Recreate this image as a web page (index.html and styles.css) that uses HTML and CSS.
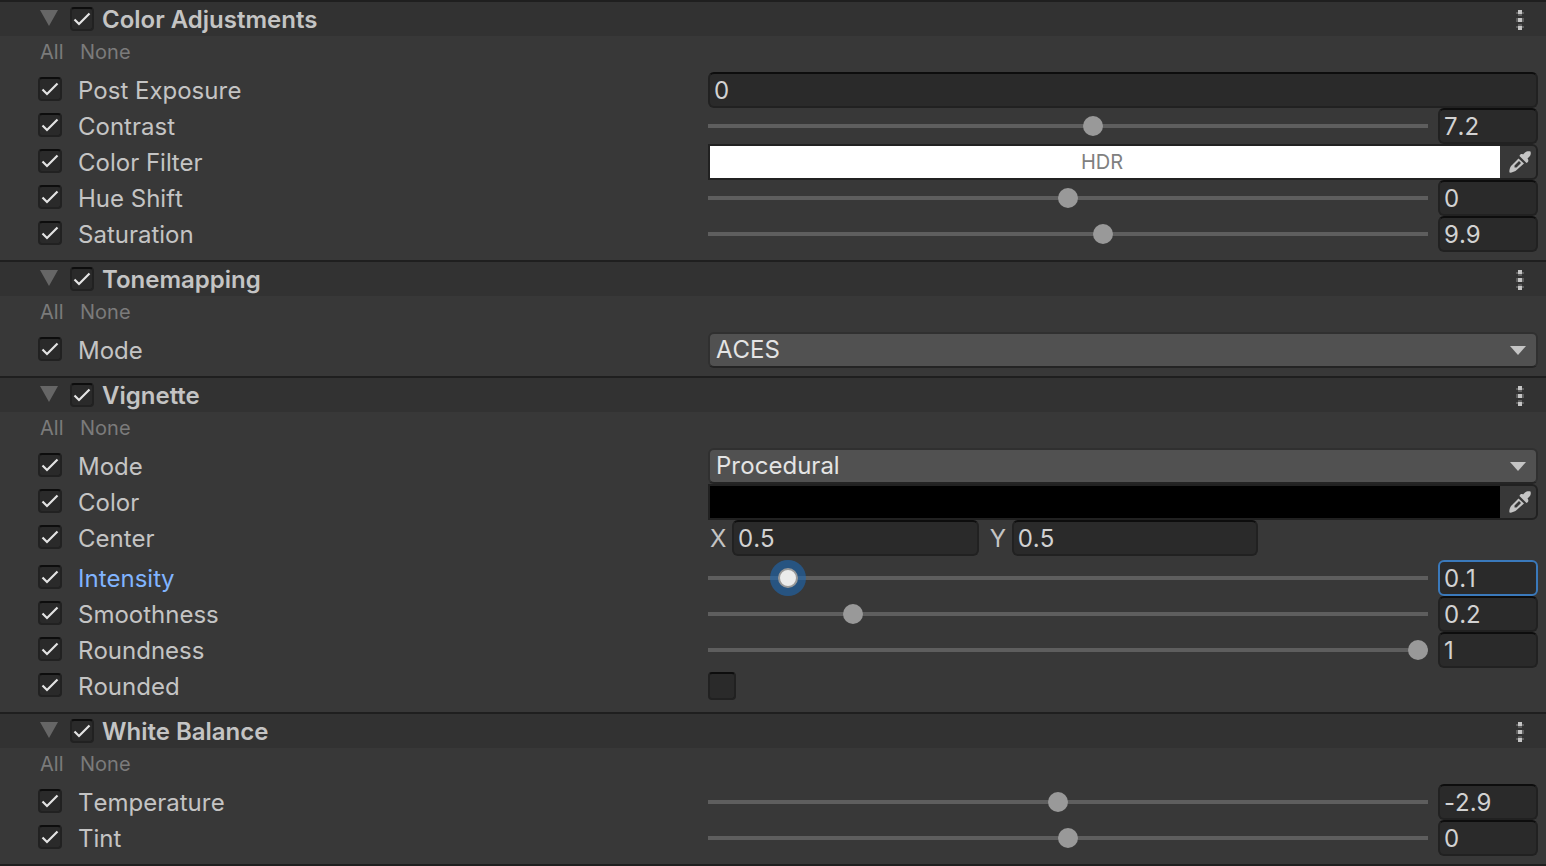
FILE: index.html
```html
<!DOCTYPE html>
<html lang="en">
<head>
<meta charset="utf-8">
<title>Volume Inspector</title>
<link rel="stylesheet" href="styles.css">
</head>
<body>
<svg class="defs" aria-hidden="true">
  <symbol id="fold" viewBox="0 0 18 16"><path d="M0 0H18L9 16Z"/></symbol>
  <symbol id="kebab" viewBox="0 0 8 20">
    <path d="M2 0H6V4H2ZM2 8H6V12H2ZM2 16H6V20H2Z"/>
    <path opacity=".3" d="M2 4H6V6H2ZM2 14H6V16H2ZM0 2H2V4H0ZM6 2H8V4H6ZM0 8H2V12H0ZM6 8H8V12H6ZM0 16H2V18H0ZM6 16H8V18H6Z"/>
  </symbol>
  <symbol id="dropper" viewBox="0 0 22 22">
    <path d="M16 1.500C17.500 0 20 0 21.500 .5C22 2 22 4 20.500 5.500L18.500 7.500C20 9 19.500 11.500 17.500 12L10.500 5C11 3 13 2.500 14 3.500Z"/>
    <path fill-rule="evenodd" d="M9.500 7.500L15 12.500L6.500 20C4.500 21 2 22 .5 21.500C0 20 .5 17.500 2 15ZM10 10L5.500 14.500V16.500H7.500L12 12Z"/>
  </symbol>
</svg>
<main class="inspector">
  <section class="component">
    <header class="bar">
      <button class="fold" aria-label="Collapse Color Adjustments"><svg><use href="#fold"/></svg></button>
      <input class="check" type="checkbox" id="color-adjustments" checked>
      <h2 class="title"><label for="color-adjustments">Color Adjustments</label></h2>
      <button class="more" aria-label="More options"><svg><use href="#kebab"/></svg></button>
    </header>
    <div class="toggles"><button class="all">All</button><button>None</button></div>
    <div class="row">
      <div class="name"><input class="check" type="checkbox" aria-label="Override Post Exposure" checked><label for="exposure">Post Exposure</label></div>
      <div class="control"><input class="field" id="exposure" type="text" value="0"></div>
    </div>
    <div class="row">
      <div class="name"><input class="check" type="checkbox" aria-label="Override Contrast" checked><label for="contrast">Contrast</label></div>
      <div class="control"><input class="slider" type="range" aria-label="Contrast slider" min="-100" max="100" step="0.1" value="7.2"><input class="field number" id="contrast" type="text" value="7.2"></div>
    </div>
    <div class="row">
      <div class="name"><input class="check" type="checkbox" aria-label="Override Color Filter" checked><label for="filter">Color Filter</label></div>
      <div class="control picker"><button class="swatch white" id="filter">HDR</button><button class="pick" aria-label="Pick color filter"><svg><use href="#dropper"/></svg></button></div>
    </div>
    <div class="row">
      <div class="name"><input class="check" type="checkbox" aria-label="Override Hue Shift" checked><label for="hue">Hue Shift</label></div>
      <div class="control"><input class="slider" type="range" aria-label="Hue Shift slider" min="-180" max="180" value="0"><input class="field number" id="hue" type="text" value="0"></div>
    </div>
    <div class="row">
      <div class="name"><input class="check" type="checkbox" aria-label="Override Saturation" checked><label for="saturation">Saturation</label></div>
      <div class="control"><input class="slider" type="range" aria-label="Saturation slider" min="-100" max="100" step="0.1" value="9.9"><input class="field number" id="saturation" type="text" value="9.9"></div>
    </div>
  </section>

  <section class="component">
    <header class="bar">
      <button class="fold" aria-label="Collapse Tonemapping"><svg><use href="#fold"/></svg></button>
      <input class="check" type="checkbox" id="tonemapping" checked>
      <h2 class="title"><label for="tonemapping">Tonemapping</label></h2>
      <button class="more" aria-label="More options"><svg><use href="#kebab"/></svg></button>
    </header>
    <div class="toggles"><button class="all">All</button><button>None</button></div>
    <div class="row">
      <div class="name"><input class="check" type="checkbox" aria-label="Override Mode" checked><label for="tone-mode">Mode</label></div>
      <div class="control dropdown"><select class="select" id="tone-mode"><option>ACES</option><option>Neutral</option><option>None</option></select></div>
    </div>
  </section>

  <section class="component">
    <header class="bar">
      <button class="fold" aria-label="Collapse Vignette"><svg><use href="#fold"/></svg></button>
      <input class="check" type="checkbox" id="vignette" checked>
      <h2 class="title"><label for="vignette">Vignette</label></h2>
      <button class="more" aria-label="More options"><svg><use href="#kebab"/></svg></button>
    </header>
    <div class="toggles"><button class="all">All</button><button>None</button></div>
    <div class="row">
      <div class="name"><input class="check" type="checkbox" aria-label="Override Mode" checked><label for="vignette-mode">Mode</label></div>
      <div class="control dropdown"><select class="select" id="vignette-mode"><option>Procedural</option><option>Masked</option></select></div>
    </div>
    <div class="row">
      <div class="name"><input class="check" type="checkbox" aria-label="Override Color" checked><label for="color">Color</label></div>
      <div class="control picker"><button class="swatch black" id="color"></button><button class="pick" aria-label="Pick vignette color"><svg><use href="#dropper"/></svg></button></div>
    </div>
    <div class="row vector">
      <div class="name"><input class="check" type="checkbox" aria-label="Override Center" checked><span>Center</span></div>
      <div class="control axes">
        <label class="axis"><span>X</span><input class="field" type="text" value="0.5"></label>
        <label class="axis"><span>Y</span><input class="field" type="text" value="0.5"></label>
      </div>
    </div>
    <div class="row active">
      <div class="name"><input class="check" type="checkbox" aria-label="Override Intensity" checked><label for="intensity">Intensity</label></div>
      <div class="control"><input class="slider" type="range" aria-label="Intensity slider" min="0" max="1" step="0.01" value="0.1"><input class="field number" id="intensity" type="text" value="0.1"></div>
    </div>
    <div class="row">
      <div class="name"><input class="check" type="checkbox" aria-label="Override Smoothness" checked><label for="smoothness">Smoothness</label></div>
      <div class="control"><input class="slider" type="range" aria-label="Smoothness slider" min="0.01" max="1" step="0.001" value="0.201"><input class="field number" id="smoothness" type="text" value="0.2"></div>
    </div>
    <div class="row">
      <div class="name"><input class="check" type="checkbox" aria-label="Override Roundness" checked><label for="roundness">Roundness</label></div>
      <div class="control"><input class="slider" type="range" aria-label="Roundness slider" min="0" max="1" step="0.01" value="1"><input class="field number" id="roundness" type="text" value="1"></div>
    </div>
    <div class="row">
      <div class="name"><input class="check" type="checkbox" aria-label="Override Rounded" checked><label for="rounded">Rounded</label></div>
      <div class="control"><input class="check large" id="rounded" type="checkbox"></div>
    </div>
  </section>

  <section class="component">
    <header class="bar">
      <button class="fold" aria-label="Collapse White Balance"><svg><use href="#fold"/></svg></button>
      <input class="check" type="checkbox" id="white-balance" checked>
      <h2 class="title"><label for="white-balance">White Balance</label></h2>
      <button class="more" aria-label="More options"><svg><use href="#kebab"/></svg></button>
    </header>
    <div class="toggles"><button class="all">All</button><button>None</button></div>
    <div class="row">
      <div class="name"><input class="check" type="checkbox" aria-label="Override Temperature" checked><label for="temperature">Temperature</label></div>
      <div class="control"><input class="slider" type="range" aria-label="Temperature slider" min="-100" max="100" step="0.1" value="-2.9"><input class="field number" id="temperature" type="text" value="-2.9"></div>
    </div>
    <div class="row">
      <div class="name"><input class="check" type="checkbox" aria-label="Override Tint" checked><label for="tint">Tint</label></div>
      <div class="control"><input class="slider" type="range" aria-label="Tint slider" min="-100" max="100" value="0"><input class="field number" id="tint" type="text" value="0"></div>
    </div>
  </section>
</main>
</body>
</html>
```

FILE: styles.css
```css
* {
  box-sizing: border-box;
}

body {
  margin: 0;
  background: #383838;
  color: #c4c4c4;
  font: 24px/34px Inter, "Liberation Sans", sans-serif;
}

body,
button,
input,
select {
  font-kerning: none;
  font-optical-sizing: none;
  font-variant-ligatures: none;
}

button,
input,
select {
  margin: 0;
  padding: 0;
  border: 0;
  background: none;
  color: inherit;
  font-family: inherit;
  font-size: inherit;
  line-height: inherit;
}

button:focus,
input:focus,
select:focus {
  outline: none;
}

svg {
  display: block;
  width: 100%;
  height: 100%;
  fill: currentColor;
}

.defs {
  display: none;
}

.inspector {
  border-bottom: 2px solid #1f1f1f;
}

.component {
  padding-bottom: 8px;
}

.bar {
  display: flex;
  align-items: center;
  height: 36px;
  padding: 0 22px 0 40px;
  border-top: 2px solid #1f1f1f;
  background: #323232;
}

.fold {
  width: 18px;
  height: 16px;
  margin: 0 12px 2px 0;
  color: #666;
}

.title {
  flex: 1;
  margin: 0 0 0 8px;
  padding-top: 2px;
  font-size: 24px;
  font-weight: 600;
  font-kerning: normal;
}

.more {
  width: 8px;
  height: 20px;
  margin-top: 2px;
}

.check {
  flex: none;
  width: 24px;
  height: 24px;
  border: 2px solid #212121;
  border-top-color: #0d0d0d;
  border-radius: 4px;
  background: #2a2a2a;
  appearance: none;
}

.check:checked {
  background: #2a2a2a url("data:image/svg+xml,%3Csvg xmlns='http://www.w3.org/2000/svg' viewBox='0 0 20 20'%3E%3Cpath d='M2.500 10.500L7 15L17.500 4.500' fill='none' stroke='%23e4e4e4' stroke-width='2.200'/%3E%3C/svg%3E") center / 20px 20px no-repeat;
}

.large {
  width: 28px;
  height: 28px;
}

.toggles {
  display: flex;
  gap: 16px;
  height: 36px;
  padding: 0 0 4px 40px;
  color: #7b7b7b;
  font-size: 20px;
  line-height: 32px;
}

.all {
  min-width: 24px;
  text-align: left;
}

.row {
  display: grid;
  grid-template-columns: 354fr 415fr;
  height: 36px;
  padding-right: 8px;
}

.name {
  display: flex;
  align-items: center;
  gap: 16px;
  padding-left: 38px;
}

.name .check {
  margin-bottom: 2px;
}

.name label,
.name span,
.axis span {
  padding-top: 2px;
}

.control {
  display: flex;
  align-items: center;
  gap: 10px;
  min-width: 0;
}

.field {
  flex: 1;
  min-width: 0;
  height: 36px;
  padding: 1px 4px 0;
  border: 2px solid #212121;
  border-top-color: #0d0d0d;
  border-radius: 6px;
  background: #2a2a2a;
  color: #d2d2d2;
  line-height: 30px;
}

.number {
  flex: 0 0 100px;
}

.slider {
  flex: 1;
  min-width: 0;
  height: 20px;
  appearance: none;
}

.slider::-webkit-slider-runnable-track {
  height: 4px;
  background: #5e5e5e;
}

.slider::-webkit-slider-thumb {
  width: 20px;
  height: 20px;
  margin-top: -8px;
  border-radius: 50%;
  background: #999;
  appearance: none;
}

.picker {
  gap: 0;
  border: 2px solid #212121;
  border-radius: 0 6px 6px 0;
}

.swatch {
  flex: 1;
  align-self: stretch;
  padding-right: 6px;
  color: #808080;
  font-size: 20px;
  line-height: 32px;
}

.white {
  background: #fff;
}

.black {
  background: #000;
}

.pick {
  width: 36px;
  height: 32px;
  padding: 5px 5px 5px 9px;
}

.dropdown {
  position: relative;
}

.dropdown::after {
  position: absolute;
  top: 14px;
  right: 12px;
  width: 16px;
  height: 9px;
  background: #c4c4c4;
  clip-path: polygon(0 0, 100% 0, 50% 100%);
  content: "";
  pointer-events: none;
}

.select {
  width: 100%;
  height: 36px;
  padding: 0 32px 0 6px;
  border: 2px solid #303030;
  border-bottom-color: #242424;
  border-radius: 6px;
  background: #515151;
  color: #e4e4e4;
  line-height: 30px;
  appearance: none;
}

.vector {
  margin-bottom: 4px;
}

.axes {
  display: grid;
  grid-template-columns: repeat(3, minmax(0, 1fr));
  column-gap: 9px;
}

.axis {
  display: flex;
  align-items: center;
}

.axis span {
  flex: 0 0 24px;
  padding-left: 2px;
}

.active {
  color: #81b4ff;
}

.active .field {
  border-color: #3a79bb;
}

.active .slider::-webkit-slider-thumb {
  border: 2px solid #999;
  background: #ebebeb;
  box-shadow: 0 0 0 8px rgba(28, 104, 179, 0.6);
}
```
